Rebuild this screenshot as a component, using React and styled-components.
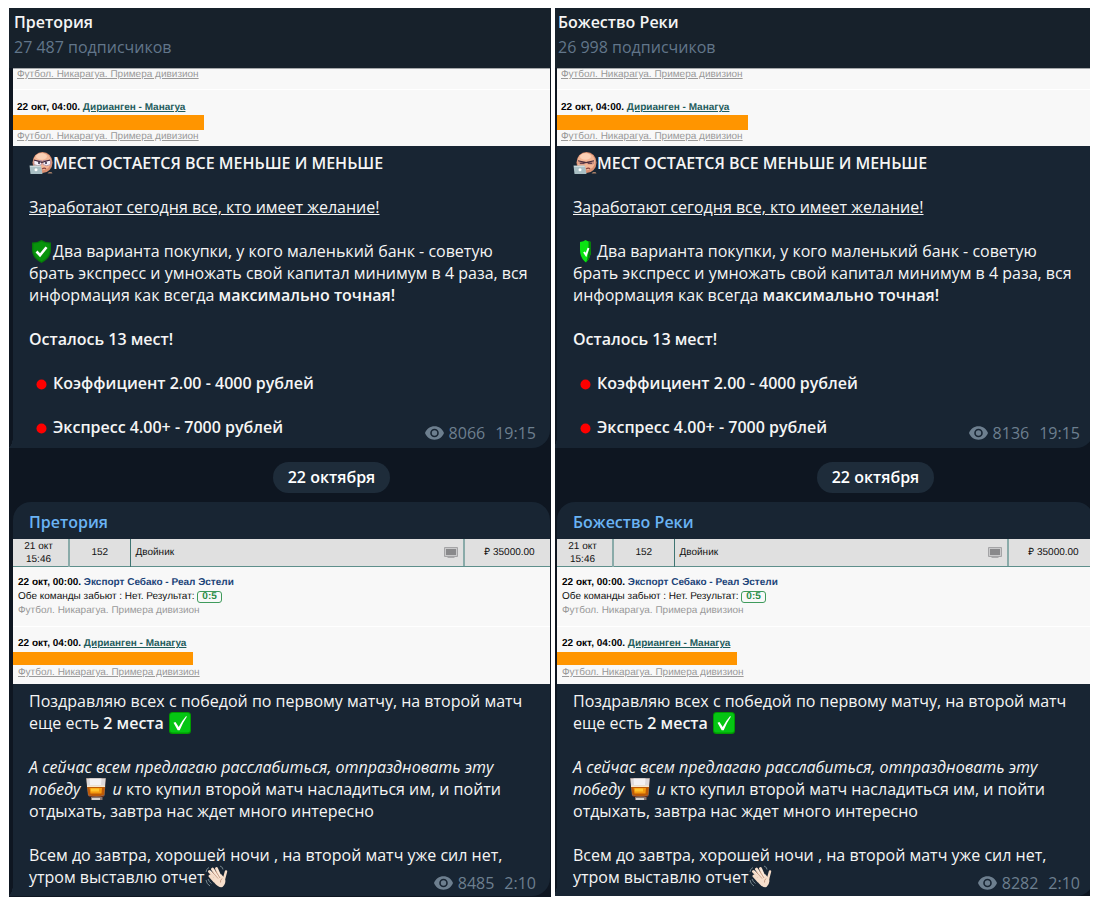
import React from "react";
import styled, { createGlobalStyle, css } from "styled-components";

const Global = createGlobalStyle`
  *, *::before, *::after { box-sizing: border-box; }
  body {
    margin: 0;
    background: #fff;
    font: 16px/22px "Open Sans", "Noto Sans", sans-serif;
    color: #f5f5f5;
  }
  p, h1, h2 { margin: 0; font-size: inherit; }
`;

const Page = styled.main`
  display: grid;
  grid-template-columns: 542fr 535fr;
  align-items: start;
  gap: 4px;
  padding: 8px 7px 5px 9px;
`;

const Panel = styled.section`
  min-width: 0;
  overflow: hidden;
  background: #0e1621;
`;

const Header = styled.header`
  display: flex;
  flex-direction: column;
  gap: 3px;
  padding: 3px 5px 10px ${(p) => (p.$cropped ? 3 : 5)}px;
  background: #17212b;
`;

const Title = styled.h1`
  font-weight: 600;
`;

const Subscribers = styled.p`
  color: #62768a;
`;

const Feed = styled.div`
  display: flex;
  flex-direction: column;
  padding: ${(p) => (p.$cropped ? "0 0 0 2px" : "0 1px 1px 4px")};
  margin-right: ${(p) => (p.$cropped ? -4 : 0)}px;
`;

const Bubble = styled.article`
  position: relative;
  background: #182533;
  border-radius: ${(p) => (p.$first ? "0 0 18px 0" : "18px 18px 18px 0")};

  &::before {
    content: "";
    position: absolute;
    left: -6px;
    bottom: 0;
    width: 6px;
    height: 12px;
    background: radial-gradient(ellipse 6px 12px at 0 0, transparent 98%, #182533 100%);
  }
`;

const Sender = styled.h2`
  padding: 9px 16px 6px;
  font-weight: 600;
  color: #6ab3f3;
`;

const Text = styled.div`
  padding: 6px 16px ${(p) => (p.$last ? 8 : 10)}px;

  p + p { margin-top: 22px; }
  strong { font-weight: 600; }
`;

const Meta = styled.footer`
  position: absolute;
  right: 14px;
  bottom: ${(p) => (p.$last ? 2 : 4)}px;
  display: flex;
  align-items: center;
  color: #6d7f8f;

  svg { margin-right: 5px; }
  time { margin-left: 10px; }
`;

const DateRow = styled.div`
  display: flex;
  justify-content: center;
  padding: 14px 0 9px 100px;
`;

const DatePill = styled.span`
  padding: 4px 15px 5px;
  border-radius: 16px;
  background: #1e2c3a;
  color: #fff;
  font-weight: 600;
`;

const Slip = styled.div`
  background: #f8f8f8;
  color: #111;
  font: 10px/14px "Liberation Sans", Arial, sans-serif;
  text-rendering: geometricPrecision;
  white-space: nowrap;
  overflow: hidden;
  ${(p) => p.$cut && css`border-top: 1px solid #a5a8aa;`}
`;

const Entry = styled.div`
  padding: ${(p) => p.$pad};
  ${(p) => p.$divided && css`border-bottom: 1px solid #fff;`}
`;

const Match = styled.div`
  font-weight: 700;
  color: #000;
`;

const MatchLink = styled.a`
  color: ${(p) => (p.$plain ? "#1c4478" : "#1f5c5c")};
  text-decoration: ${(p) => (p.$plain ? "none" : "underline")};
`;

const League = styled.div`
  color: #999;
  line-height: ${(p) => (p.$tight ? 12 : 14)}px;
  text-decoration: ${(p) => (p.$underlined ? "underline" : "none")};
`;

const Redaction = styled.div`
  width: ${(p) => p.$width}px;
  height: ${(p) => p.$height}px;
  background: #ff9500;
`;

const Score = styled.b`
  display: inline-block;
  padding: 0 4px;
  border: 1px solid #3f9b5c;
  border-radius: 3px;
  line-height: 10px;
  color: #2a8c47;
`;

const Coupon = styled.table`
  width: 100%;
  height: 28px;
  table-layout: fixed;
  border-collapse: collapse;
  background: #e0e0e0;
  border-bottom: 1px solid #5e8f8c;
  line-height: 13px;
  text-align: center;
`;

const Cell = styled.td`
  width: ${(p) => p.$width};
  padding: ${(p) => p.$pad || "0"};
  border-right: ${(p) => p.$line || "0"};
`;

const Outcome = styled.div`
  display: flex;
  justify-content: space-between;
  align-items: center;
`;

const Sum = styled.div`
  padding-left: 4px;
  line-height: 27px;
  border-left: 2px solid #8aaba9;
`;

const Emoji = styled.svg.attrs({ width: 24, height: 22, viewBox: "0 0 24 22", "aria-hidden": true })`
  display: inline-block;
  overflow: visible;
  vertical-align: -5px;
`;

const Eye = () => (
  <svg width="19" height="14" viewBox="0 0 19 14" aria-hidden="true">
    <path fill="currentColor" fillRule="evenodd" d="M9.500 .3C5.200 .3 1.600 2.900 0 7c1.600 4.100 5.200 6.700 9.500 6.700s7.900-2.600 9.500-6.700C17.400 2.900 13.800 .3 9.500 .3Zm0 2.400a4.300 4.300 0 1 1 0 8.600 4.300 4.300 0 0 1 0-8.600Zm0 1.600a2.700 2.700 0 1 0 0 5.400 2.700 2.700 0 0 0 0-5.400Z" />
  </svg>
);

const Hacker = ({ squint }) => (
  <Emoji>
    <ellipse cx="13.500" cy="10.500" rx="10" ry="10.500" fill="#d98e70" />
    <ellipse cx="13.200" cy="9.500" rx="8.800" ry="8.800" fill="#f3b696" />
    <ellipse cx="12.500" cy="4.500" rx="5.500" ry="3.200" fill="#fbd0b6" />
    {squint ? (
      <>
        <path d="M5.500 9.500h7v2.500q-3.500 1-7 0zM14 9.500h7v2.500q-3.500 1-7 0z" fill="#c98f80" />
        <path d="M5 8.800l8 1.800 8-1.800M7 11.300h4.500M15 11.300h4" stroke="#4b2d3c" strokeWidth="1.100" fill="none" />
      </>
    ) : (
      <>
        <path d="M5 8.500h7.500v4q-3.700 2.500-7.500 0zM14 8.500h7.500v4q-3.700 2.500-7.500 0z" fill="#f4f0f8" stroke="#a98596" strokeWidth=".8" />
        <path d="M5 8l8 2.300 8-2.300" stroke="#45283a" strokeWidth="1.200" fill="none" />
        <circle cx="10" cy="11" r="1" fill="#2b2440" />
        <circle cx="17" cy="11" r="1" fill="#2b2440" />
      </>
    )}
    <path d="M13 17q2.500-1.800 4 0" stroke="#8c4640" strokeWidth="1.200" fill="none" />
    <path d="M.500 13.500h11.500l1.500 8.500H1.500z" fill="#a9bfc4" />
    <path d="M1 14h10.500l.3 1H1.200z" fill="#cbd9dc" />
    <circle cx="7" cy="17.800" r="1.500" fill="#fff" />
    <path d="M18.500 21.500l1.500-1.500h2.500l1 1.500z" fill="#a57f68" />
  </Emoji>
);

const Shield = ({ turned }) => (
  <Emoji>
    {turned ? (
      <>
        <path d="M7 2q4-.5 5.500-2 2 1.500 5.500 2v8q0 8-5 12.500Q7 18 7 10z" fill="#0be512" />
        <path d="M15.500 1l2.500 1v8q0 8-5 12.500 3-5 2.500-21.500z" fill="#077d0b" />
        <path d="M11 12l2 3 2.500-7" stroke="#fff" strokeWidth="2" fill="none" />
      </>
    ) : (
      <>
        <path d="M3 2.500Q8.500 2.500 12.500 0 16.500 2.500 22 2.500V10q0 8-9.500 13Q3 18 3 10z" fill="#067a0a" />
        <path d="M4.300 3.700q4.700-.2 8.200-2.200 3.500 2 8.200 2.200V10q0 7-8.200 11.500Q4.300 17 4.300 10z" fill="#08930c" />
        <path d="M7.500 11.500l3.500 3.700 6.500-8" stroke="#fff" strokeWidth="2.600" fill="none" />
      </>
    )}
  </Emoji>
);

const RedDot = () => (
  <Emoji>
    <circle cx="12.500" cy="12.500" r="5" fill="#fe0000" />
  </Emoji>
);

const CheckBox = () => (
  <Emoji>
    <rect x="1" y="0" width="22" height="22" rx="3.500" fill="#009b00" />
    <rect x="2" y="1" width="20" height="19.500" rx="2.500" fill="#05c513" />
    <path d="M5.500 10.800l2-.9 3.200 5.200Q14 8.500 18 4.200l1 .3q-4.500 6.500-7.300 13.700h-2z" fill="#fff" />
  </Emoji>
);

const Glass = () => (
  <Emoji>
    <path d="M2 0h20l-1.500 17.500-2 1.500v3H7v-3l-3-1.500z" fill="#8a7771" />
    <path d="M2.500.5h19l-.6 7.500H3.100z" fill="#ded9da" />
    <path d="M5.500.5h12L17 7H6z" fill="#f4f1f2" />
    <path d="M3 8h18l-.8 9q-8 2.500-15.800 0z" fill="#bd5a08" />
    <path d="M5.500 10h12.500l-.5 5.500h-11z" fill="#f49a10" />
    <path d="M7 10.500h8v3H7z" fill="#ffc32d" />
    <path d="M3 7.500h18v1.500H3z" fill="#f6e7cf" />
    <path d="M4.500 17.500q8 2.500 15.500 0l-.5 1.500H5z" fill="#6f2c12" />
    <path d="M8 20h8v2H8z" fill="#d6d2d0" />
  </Emoji>
);

const Wave = () => (
  <Emoji>
    <g stroke="#f5dcc8" strokeWidth="3" strokeLinecap="round">
      <path d="M12 13L4.500 5.500M13 11L7.500 3.200M15 10.500L11.500 2.500M9.500 15L5 10" />
      <path d="M19 13l2-7.500" strokeWidth="2.500" />
    </g>
    <path d="M8 12.500L16 8l4 4.500q1.500 5-2.500 8.500-4 1-8-4z" fill="#f7dfcc" />
    <path d="M5 5l7 7M8 3.500l6 8M12 3l3.500 7.500" stroke="#fdf0e4" strokeWidth="1" />
    <path d="M7 6l6 6.500M10.500 5l4.500 7M17 12.500q-2 2-1.500 4" stroke="#ba8c72" strokeWidth=".8" fill="none" />
    <path d="M1 6q0-3 3-4.500M1 14q.5 4 4 6M3 13q1 3 3.500 4.500M15 0q3 1 3 3.500" stroke="#75858c" strokeWidth="1" fill="none" />
  </Emoji>
);

const Monitor = () => (
  <svg width="14" height="12" viewBox="0 0 14 12" aria-hidden="true">
    <path d="M.5.500h13v9H.500z" fill="#c9c9ca" stroke="#a4a4a6" />
    <path d="M2 2h10v6H2z" fill="#89898b" />
    <path d="M3.500 10h7v1h-7z" fill="#aaaaac" />
  </svg>
);

const LEAGUE = "Футбол. Никарагуа. Примера дивизион";

const SecondMatch = () => (
  <Match>
    22 окт, 04:00. <MatchLink href="#match">Дирианген - Манагуа</MatchLink>
  </Match>
);

const TopSlip = () => (
  <Slip $cut>
    <Entry $divided $pad="0 4px 8px">
      <League $underlined $tight>{LEAGUE}</League>
    </Entry>
    <Entry $pad="11px 4px 0">
      <SecondMatch />
    </Entry>
    <Redaction $width={191} $height={15} />
    <Entry $pad="0 4px 2px">
      <League $underlined>{LEAGUE}</League>
    </Entry>
  </Slip>
);

const CouponSlip = () => (
  <Slip>
    <Coupon>
      <tbody>
        <tr>
          <Cell $width="56px" $pad="0 4px 0 0" $line="2px solid #8aaba9">21 окт<br />15:46</Cell>
          <Cell $width="61px" $line="1px solid #3f7572">152</Cell>
          <Cell $pad="0 5px">
            <Outcome>
              Двойник
              <Monitor />
            </Outcome>
          </Cell>
          <Cell $width="87px">
            <Sum>₽ 35000.00</Sum>
          </Cell>
        </tr>
      </tbody>
    </Coupon>
    <Entry $divided $pad="9px 5px 8px">
      <Match>
        22 окт, 00:00. <MatchLink $plain href="#match">Экспорт Себако - Реал Эстели</MatchLink>
      </Match>
      <div>
        Обе команды забьют : Нет. Результат: <Score>0:5</Score>
      </div>
      <League>{LEAGUE}</League>
    </Entry>
    <Entry $pad="10px 5px 1px">
      <SecondMatch />
    </Entry>
    <Redaction $width={180} $height={13} />
    <Entry $pad="1px 5px 4px">
      <League $underlined>{LEAGUE}</League>
    </Entry>
  </Slip>
);

const Channel = ({ name, subscribers, views, cropped }) => (
  <Panel>
    <Header $cropped={cropped}>
      <Title>{name}</Title>
      <Subscribers>{subscribers} подписчиков</Subscribers>
    </Header>
    <Feed $cropped={cropped}>
      <Bubble $first>
        <TopSlip />
        <Text>
          <p><Hacker squint={cropped} /><strong>МЕСТ ОСТАЕТСЯ ВСЕ МЕНЬШЕ И МЕНЬШЕ</strong></p>
          <p><u>Заработают сегодня все, кто имеет желание!</u></p>
          <p>
            <Shield turned={cropped} />Два варианта покупки, у кого маленький банк - советую
            брать экспресс и умножать свой капитал минимум в 4 раза, вся
            информация как всегда <strong>максимально точная!</strong>
          </p>
          <p><strong>Осталось 13 мест!</strong></p>
          <p><RedDot /><strong>Коэффициент 2.00 - 4000 рублей</strong></p>
          <p><RedDot /><strong>Экспресс 4.00+ - 7000 рублей</strong></p>
        </Text>
        <Meta><Eye />{views[0]}<time>19:15</time></Meta>
      </Bubble>
      <DateRow><DatePill>22 октября</DatePill></DateRow>
      <Bubble>
        <Sender>{name}</Sender>
        <CouponSlip />
        <Text $last>
          <p>
            Поздравляю всех с победой по первому матчу, на второй матч
            еще есть <strong>2 места</strong> <CheckBox />
          </p>
          <p>
            <em>А сейчас всем предлагаю расслабиться, отпраздновать эту
            победу <Glass /> и</em> кто купил второй матч насладиться им, и пойти
            отдыхать, завтра нас ждет много интересно
          </p>
          <p>
            Всем до завтра, хорошей ночи , на второй матч уже сил нет,
            утром выставлю отчет<Wave />
          </p>
        </Text>
        <Meta $last><Eye />{views[1]}<time>2:10</time></Meta>
      </Bubble>
    </Feed>
  </Panel>
);

export default function App() {
  return (
    <>
      <Global />
      <Page>
        <Channel name="Претория" subscribers="27 487" views={["8066", "8485"]} />
        <Channel name="Божество Реки" subscribers="26 998" views={["8136", "8282"]} cropped />
      </Page>
    </>
  );
}
